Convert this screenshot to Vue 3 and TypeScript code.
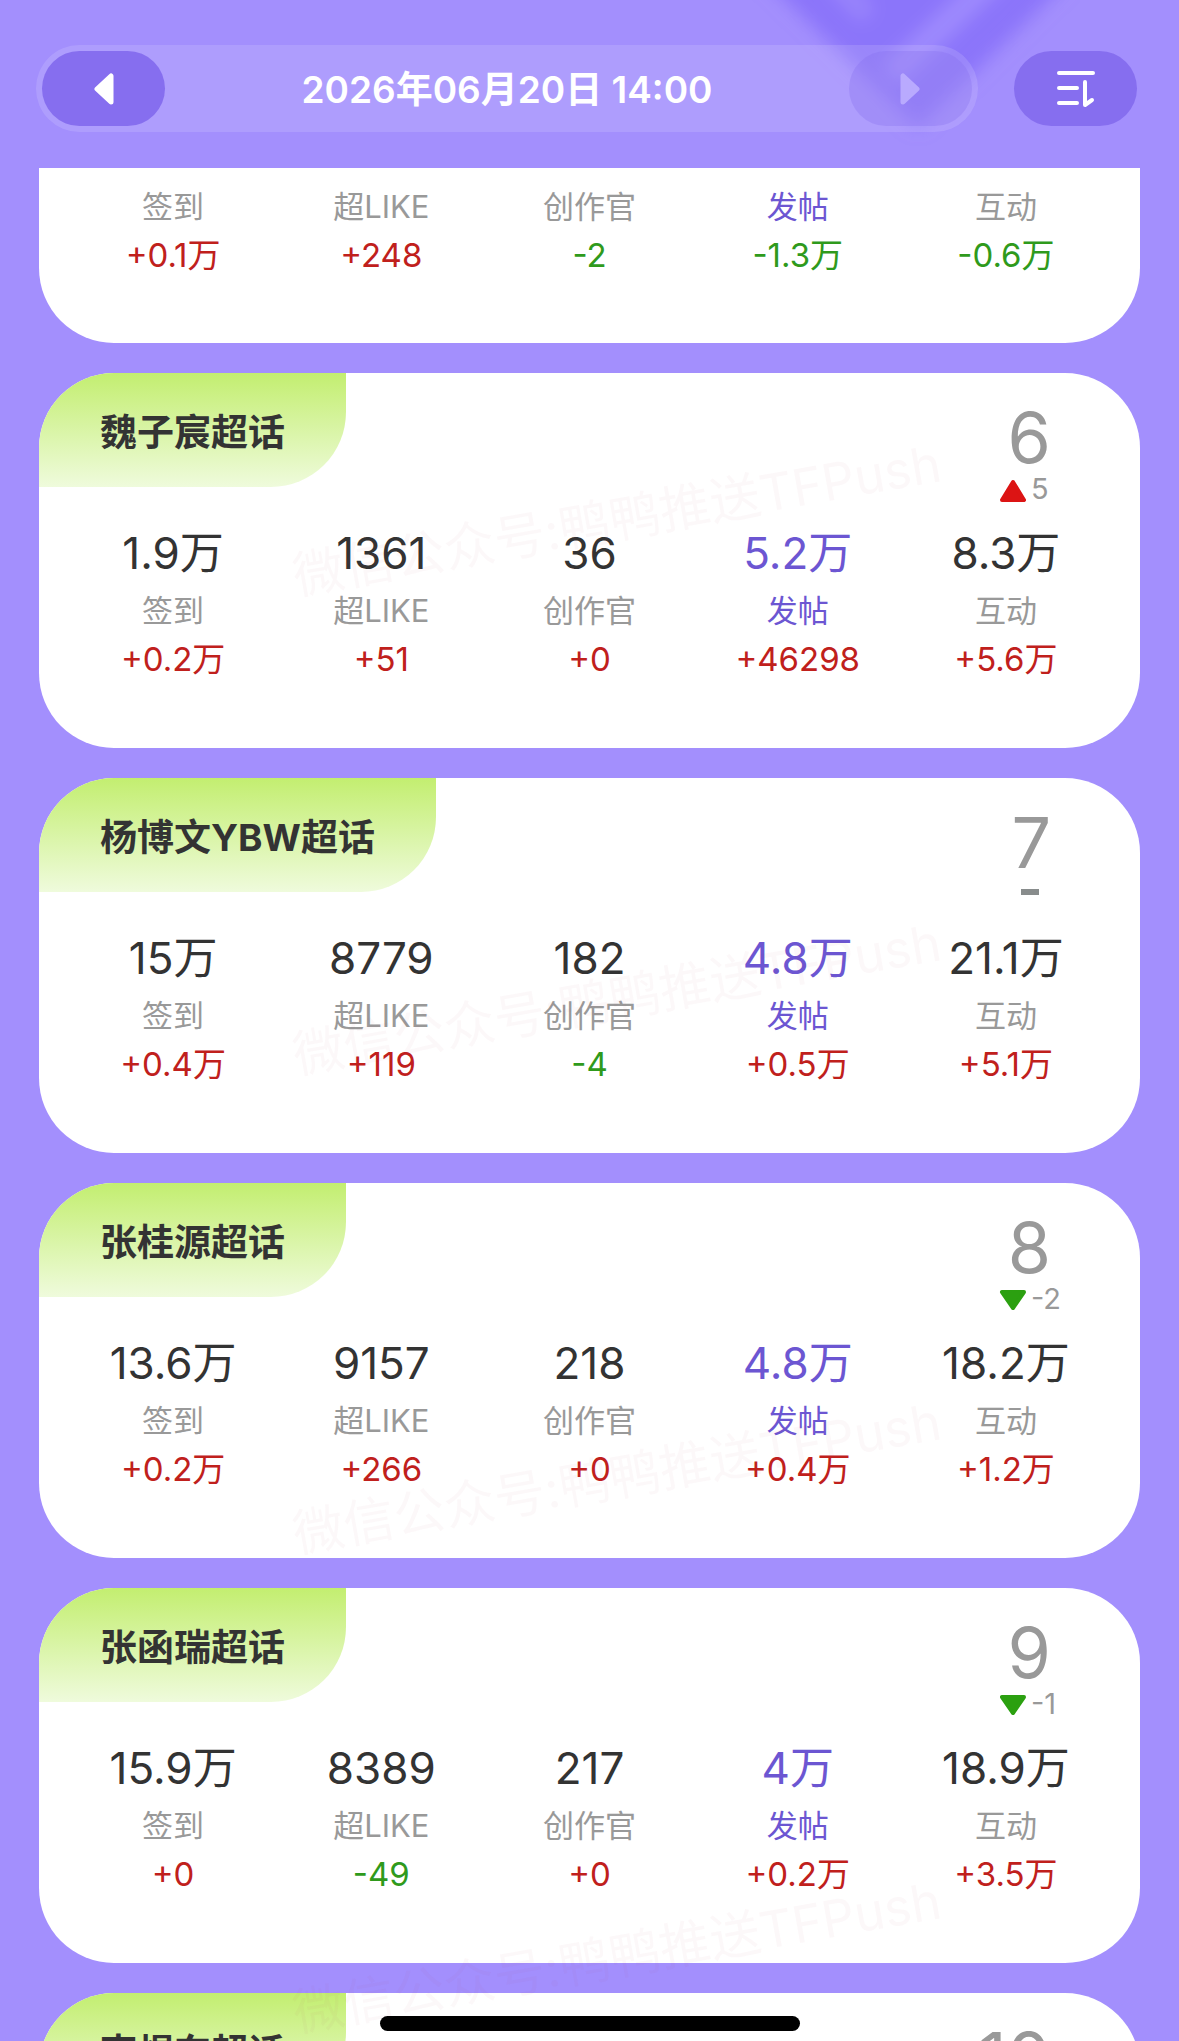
<script setup lang="ts">
interface Stat {
  label: string
  value?: string
  delta?: string
}

interface Topic {
  name: string
  rank: string
  change: number
  stats: Stat[]
}

const labels = ['签到', '超LIKE', '创作官', '发帖', '互动']
const activeLabel = '发帖'

function makeStats(values: string[], deltas: string[]): Stat[] {
  return labels.map((label, i) => ({ label, value: values[i], delta: deltas[i] }))
}

const scrolledStats = makeStats([], ['+0.1万', '+248', '-2', '-1.3万', '-0.6万'])

const topics: Topic[] = [
  {
    name: '魏子宸超话',
    rank: '6',
    change: 5,
    stats: makeStats(['1.9万', '1361', '36', '5.2万', '8.3万'], ['+0.2万', '+51', '+0', '+46298', '+5.6万']),
  },
  {
    name: '杨博文YBW超话',
    rank: '7',
    change: 0,
    stats: makeStats(['15万', '8779', '182', '4.8万', '21.1万'], ['+0.4万', '+119', '-4', '+0.5万', '+5.1万']),
  },
  {
    name: '张桂源超话',
    rank: '8',
    change: -2,
    stats: makeStats(['13.6万', '9157', '218', '4.8万', '18.2万'], ['+0.2万', '+266', '+0', '+0.4万', '+1.2万']),
  },
  {
    name: '张函瑞超话',
    rank: '9',
    change: -1,
    stats: makeStats(['15.9万', '8389', '217', '4万', '18.9万'], ['+0', '-49', '+0', '+0.2万', '+3.5万']),
  },
  { name: '李煜东超话', rank: '10', change: 0, stats: [] },
]

const watermarks = [1, 2, 3, 4]
</script>

<template>
  <main class="page">
    <svg class="glow" viewBox="0 0 340 180" aria-hidden="true">
      <defs>
        <filter id="soft" x="-20%" y="-40%" width="140%" height="180%">
          <feGaussianBlur stdDeviation="9" />
        </filter>
      </defs>
      <g filter="url(#soft)">
        <path d="M4 -40 L178 128 L350 -40 Z" fill="#8b75fa" />
        <path d="M85 -30 L128 16" stroke="#9a85fc" stroke-width="20" fill="none" />
        <path d="M262 -30 L150 76" stroke="#9f8bfe" stroke-width="24" fill="none" />
      </g>
    </svg>

    <header class="toolbar">
      <div class="date-bar">
        <button class="pill" type="button" aria-label="上一时段">
          <svg class="arrow" viewBox="0 0 20 32" aria-hidden="true">
            <path d="M17 3 V29 L3 16 Z" />
          </svg>
        </button>
        <h1 class="date">2026年06月20日 14:00</h1>
        <button class="pill pill-off" type="button" disabled aria-label="下一时段">
          <svg class="arrow" viewBox="0 0 20 32" aria-hidden="true">
            <path d="M3 3 V29 L17 16 Z" />
          </svg>
        </button>
      </div>
      <button class="pill" type="button" aria-label="排序">
        <svg class="sort" viewBox="0 0 40 38" aria-hidden="true">
          <path d="M3 3 H37 M3 18 H21 M3 33 H21 M29 12 V35 L36 30" />
        </svg>
      </button>
    </header>

    <div class="scroller">
      <div class="list">
        <section class="card card-scrolled">
          <dl class="stats">
            <div v-for="s in scrolledStats" :key="s.label" class="stat" :class="{ active: s.label === activeLabel }">
              <dt class="label">{{ s.label }}</dt>
              <dd class="delta" :class="{ down: s.delta?.startsWith('-') }">{{ s.delta }}</dd>
            </div>
          </dl>
        </section>

        <section v-for="t in topics" :key="t.rank" class="card">
          <div class="head">
            <h2 class="name">{{ t.name }}</h2>
            <div class="rank">
              <span class="number">{{ t.rank }}</span>
              <span v-if="t.stats.length" class="trend">
                <svg v-if="t.change > 0" class="mark up" viewBox="0 0 28 28" aria-hidden="true">
                  <path d="M14 7 L25 25 H3 Z" />
                </svg>
                <svg v-else-if="t.change < 0" class="mark fall" viewBox="0 0 28 28" aria-hidden="true">
                  <path d="M3 7 H25 L14 23 Z" />
                </svg>
                <i v-else class="flat"></i>
                <span v-if="t.change">{{ t.change }}</span>
              </span>
            </div>
          </div>
          <dl class="stats">
            <div v-for="s in t.stats" :key="s.label" class="stat" :class="{ active: s.label === activeLabel }">
              <dd class="value">{{ s.value }}</dd>
              <dt class="label">{{ s.label }}</dt>
              <dd class="delta" :class="{ down: s.delta?.startsWith('-') }">{{ s.delta }}</dd>
            </div>
          </dl>
        </section>
      </div>

      <div class="watermarks" aria-hidden="true">
        <span v-for="n in watermarks" :key="n" class="watermark">微信公众号:鸭鸭推送TFPush</span>
      </div>
    </div>

    <div class="home-bar"></div>
  </main>
</template>

<style>
body {
  margin: 0;
  background: #a38ffd;
}
</style>

<style scoped>
.page {
  position: relative;
  display: flex;
  flex-direction: column;
  height: 100vh;
  overflow: hidden;
  background: #a38ffd;
  color: #333;
  font-family: Inter, 'Noto Sans CJK SC', sans-serif;
}

.glow {
  position: absolute;
  top: 0;
  right: 99px;
  width: 340px;
  height: 180px;
}

.toolbar {
  position: relative;
  flex: none;
  display: flex;
  align-items: center;
  gap: 36px;
  padding: 45px 42px 36px 36px;
}

.date-bar {
  flex: 1;
  display: flex;
  align-items: center;
  justify-content: space-between;
  box-sizing: border-box;
  height: 87px;
  padding: 0 6px;
  border-radius: 44px;
  background: rgba(255, 255, 255, 0.13);
}

.date {
  margin: 0;
  padding-top: 2px;
  color: #fff;
  font-size: 37px;
  font-weight: 600;
  line-height: 48px;
}

.pill {
  flex: none;
  display: flex;
  align-items: center;
  justify-content: center;
  width: 123px;
  height: 75px;
  padding: 0;
  border: 0;
  border-radius: 38px;
  background: #866eef;
}

.pill-off {
  background: rgba(134, 110, 239, 0.3);
}

.arrow {
  width: 20px;
  height: 32px;
  fill: #fff;
  stroke: #fff;
  stroke-width: 5;
  stroke-linejoin: round;
}

.pill-off .arrow {
  fill: #b9aafe;
  stroke: #b9aafe;
}

.sort {
  width: 40px;
  height: 38px;
  fill: none;
  stroke: #fff;
  stroke-width: 4;
  stroke-linecap: round;
  stroke-linejoin: round;
}

.scroller {
  position: relative;
  flex: 1;
  min-height: 0;
  overflow: hidden;
}

.list {
  display: flex;
  flex-direction: column;
  gap: 30px;
  padding: 0 39px;
}

.card {
  flex: none;
  padding-bottom: 67px;
  border-radius: 75px;
  background: #fff;
  overflow: hidden;
}

.card-scrolled {
  padding-top: 13px;
  padding-bottom: 66px;
  border-radius: 0 0 75px 75px;
}

.head {
  display: flex;
  align-items: flex-start;
  justify-content: space-between;
  height: 148px;
  padding-right: 89px;
}

.name {
  margin: 0;
  padding: 6px 61px 0;
  border-bottom-right-radius: 75px;
  background: linear-gradient(#c3ee70, #effbdc);
  font-size: 37px;
  font-weight: 700;
  line-height: 108px;
}

.rank {
  display: flex;
  flex-direction: column;
  width: 52px;
  padding-top: 32px;
  color: #999;
}

.number {
  display: flex;
  justify-content: flex-end;
  font-size: 70px;
  line-height: 66px;
}

.trend {
  display: flex;
  align-items: center;
  gap: 4px;
  height: 36px;
  font-size: 29px;
  line-height: 36px;
}

.mark {
  flex: none;
  width: 28px;
  height: 28px;
  stroke-width: 4;
  stroke-linejoin: round;
}

.up {
  fill: #dc1414;
  stroke: #dc1414;
}

.fall {
  fill: #2ba010;
  stroke: #2ba010;
}

.flat {
  width: 18px;
  height: 6px;
  margin: 0 0 4px 22px;
  background: #888c8c;
}

.stats {
  display: flex;
  margin: 0;
  padding: 0 30px;
}

.stat {
  flex: 1 1 0;
  display: flex;
  flex-direction: column;
  text-align: center;
  white-space: nowrap;
}

.value {
  margin: 0;
  font-size: 44px;
  line-height: 64px;
}

.label {
  color: #999;
  font-size: 31px;
  line-height: 52px;
}

.delta {
  margin: 0;
  color: #c0201c;
  font-size: 33px;
  line-height: 44px;
}

.delta.down {
  color: #2f9a1c;
}

.active .value,
.active .label {
  color: #6c56d2;
}

.watermarks {
  position: absolute;
  top: 0;
  left: 0;
  right: 0;
  display: grid;
  grid-auto-rows: 479px;
  place-items: center;
  padding: 108px 0 0 54px;
  pointer-events: none;
}

.watermark {
  color: rgba(170, 70, 90, 0.04);
  font-size: 51px;
  font-weight: 400;
  transform: rotate(-10deg);
}

.home-bar {
  position: absolute;
  bottom: 10px;
  left: 50%;
  width: 420px;
  height: 15px;
  margin-left: -210px;
  border-radius: 8px;
  background: #000;
}
</style>
